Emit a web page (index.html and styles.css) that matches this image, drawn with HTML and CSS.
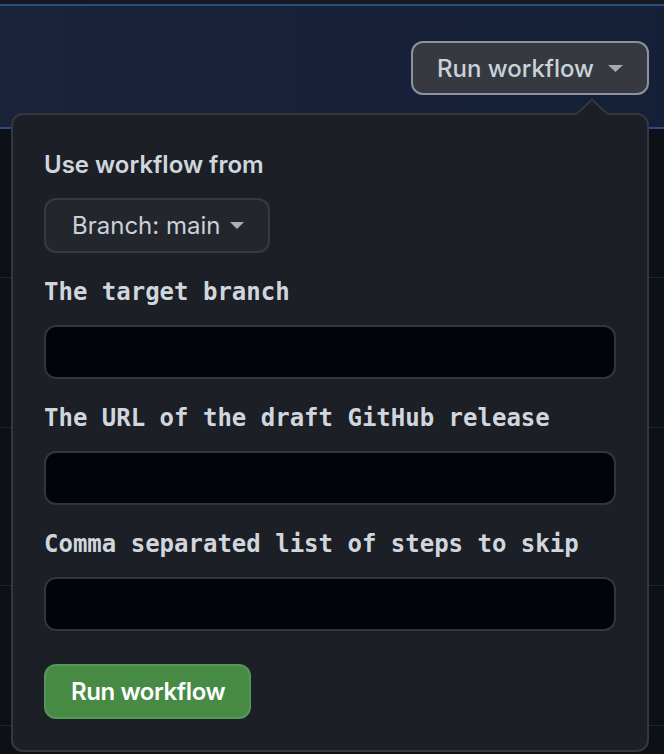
FILE: index.html
```html
<!DOCTYPE html>
<html lang="en">
<head>
<meta charset="utf-8">
<title>Run workflow</title>
<link rel="stylesheet" href="styles.css">
</head>
<body>
<div class="page">
  <div class="topstrip"></div>
  <header class="banner">
    <button class="btn btn-run" type="button">
      <span>Run workflow</span>
      <svg class="caret caret-run" width="15" height="7" viewBox="0 0 15 7" aria-hidden="true"><path d="M0 0h15L7.5 7z"/></svg>
    </button>
  </header>
  <div class="rows">
    <div class="row row-a"></div>
    <div class="row row-b"></div>
    <div class="row row-c"></div>
    <div class="row row-d"></div>
    <div class="row row-e"></div>
  </div>

  <div class="popover">
    <svg class="popover-arrow" width="32" height="19" viewBox="0 0 32 19" aria-hidden="true">
      <rect x="0" y="16" width="32" height="3" class="arrow-fill"/>
      <path d="M0 16.5 L16 1.5 L32 16.5" class="arrow-shape"/>
    </svg>
    <form class="popover-body">
      <div class="label-sans">Use workflow from</div>
      <button class="btn btn-branch" type="button">
        <span>Branch: main</span>
        <svg class="caret caret-branch" width="14" height="7" viewBox="0 0 14 7" aria-hidden="true"><path d="M0 0h14L7 7z"/></svg>
      </button>
      <label class="label-mono" for="f1">The target branch</label>
      <input class="text-input" id="f1" type="text">
      <label class="label-mono" for="f2">The URL of the draft GitHub release</label>
      <input class="text-input" id="f2" type="text">
      <label class="label-mono" for="f3">Comma separated list of steps to skip</label>
      <input class="text-input last" id="f3" type="text">
      <button class="btn btn-primary" type="button">Run workflow</button>
    </form>
  </div>
</div>
</body>
</html>
```

FILE: styles.css
```css
* { box-sizing: border-box; }

html, body {
  margin: 0;
  padding: 0;
}

body {
  width: 664px;
  height: 754px;
  overflow: hidden;
  background: #0d1117;
  color: #c9d1d9;
  font-family: Inter, "Noto Sans", "Liberation Sans", sans-serif;
}

.page {
  position: relative;
  height: 754px;
}

.topstrip {
  height: 4px;
  background: #151a21;
}

.banner {
  height: 125px;
  border-top: 2px solid #2b4c84;
  border-bottom: 2px solid #2b4c84;
  background: linear-gradient(90deg, #1a2339 0%, #172038 60%, #152038 100%);
  display: flex;
  justify-content: flex-end;
  align-items: flex-start;
  padding: 35px 15px 0 0;
}

.btn {
  font-family: inherit;
  font-size: 24px;
  display: flex;
  align-items: center;
  margin: 0;
  cursor: pointer;
  border-radius: 12px;
  white-space: nowrap;
}

.btn-run {
  height: 54px;
  padding: 0 24px;
  gap: 14px;
  background: #363a40;
  border: 2px solid #8b939c;
  color: #c9d1d9;
  font-weight: 500;
}

.caret { display: block; flex: none; }
.caret-run path { fill: #a3aab2; }
.caret-branch path { fill: #aab1b8; }

.rows {
  display: flex;
  flex-direction: column;
}

.row {
  border-bottom: 1px solid #21262d;
}
.row-a { height: 149px; }
.row-b { height: 150px; }
.row-c { height: 158px; }
.row-d { height: 140px; }
.row-e { height: 40px; border-bottom: 0; }

.popover {
  position: absolute;
  left: 11px;
  top: 113px;
  width: 638px;
  height: 639px;
  background: #1c1f25;
  border: 2px solid #33383f;
  border-radius: 12px;
}

.popover-arrow {
  position: absolute;
  left: 563px;
  top: -17px;
  display: block;
}
.arrow-fill { fill: #1c1f25; }
.arrow-shape {
  fill: #1c1f25;
  stroke: #33383f;
  stroke-width: 2;
}

.popover-body {
  display: flex;
  flex-direction: column;
  align-items: flex-start;
  padding: 35px 31px 31px;
  margin: 0;
}

.label-sans {
  font-size: 24px;
  line-height: 30px;
  font-weight: 600;
  color: #d0d6dd;
  margin-bottom: 18px;
}

.btn-branch {
  height: 55px;
  padding: 0 24px 0 26px;
  gap: 10px;
  background: #23272d;
  border: 2px solid #363b42;
  color: #c9d1d9;
  font-weight: 400;
  margin-bottom: 24px;
}

.label-mono {
  display: block;
  font-family: "DejaVu Sans Mono", "Liberation Mono", monospace;
  font-weight: bold;
  font-size: 24px;
  line-height: 30px;
  color: #d0d6dd;
  margin-bottom: 18px;
  white-space: nowrap;
}

.text-input {
  display: block;
  width: 100%;
  height: 54px;
  margin: 0 0 24px;
  padding: 0 16px;
  background: #020409;
  border: 2px solid #30363d;
  border-radius: 12px;
  color: #c9d1d9;
  font: inherit;
  font-size: 24px;
  outline: none;
}
.text-input.last { margin-bottom: 33px; }

.btn-primary {
  height: 55px;
  padding: 0 24px 0 25px;
  background: #468a44;
  border: 2px solid #55975a;
  color: #ffffff;
  font-weight: 600;
  letter-spacing: -0.4px;
}
```
